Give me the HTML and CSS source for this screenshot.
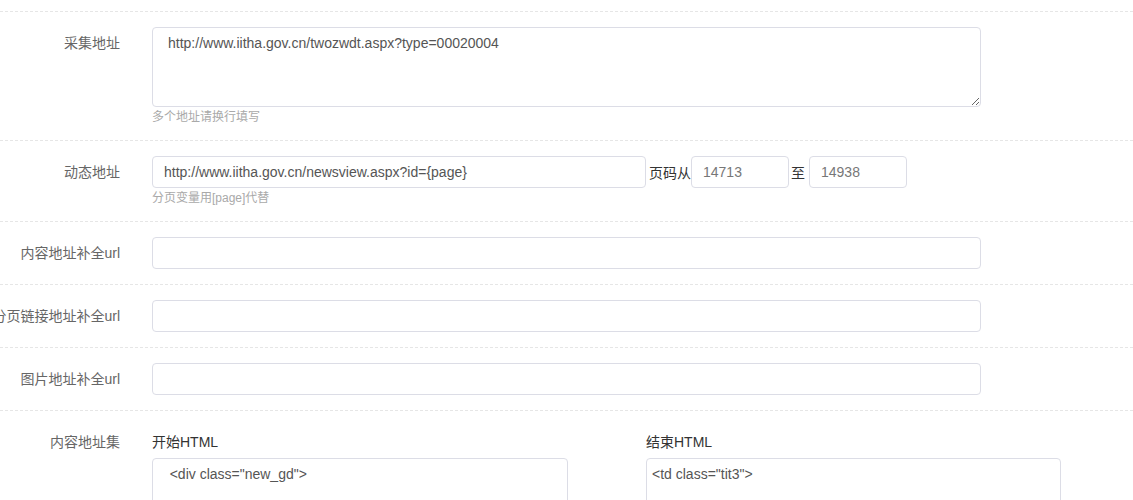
FILE: index.html
```html
<!DOCTYPE html>
<html lang="zh-CN">
<head>
    <meta charset="UTF-8">
    <meta name="viewport" content="width=device-width, initial-scale=1.0">
    <title>采集设置</title>
    <link rel="stylesheet" href="styles.css">
</head>
<body>
    <form class="form">
        <div class="form-item form-edge"></div>

        <div class="form-item">
            <label class="form-label">采集地址</label>
            <div class="form-block">
                <textarea class="input url-area">http://www.iitha.gov.cn/twozwdt.aspx?type=00020004</textarea>
                <div class="form-tip">多个地址请换行填写</div>
            </div>
        </div>

        <div class="form-item">
            <label class="form-label">动态地址</label>
            <div class="form-block">
                <div class="page-range">
                    <input class="input dyn-url" type="text" value="http://www.iitha.gov.cn/newsview.aspx?id={page}">
                    <span class="range-text">页码从</span>
                    <input class="input page-num" type="text" value="14713">
                    <span class="range-text range-to">至</span>
                    <input class="input page-num page-end" type="text" value="14938">
                </div>
                <div class="form-tip">分页变量用[page]代替</div>
            </div>
        </div>

        <div class="form-item">
            <label class="form-label">内容地址补全url</label>
            <div class="form-block">
                <input class="input wide" type="text">
            </div>
        </div>

        <div class="form-item">
            <label class="form-label">分页链接地址补全url</label>
            <div class="form-block">
                <input class="input wide" type="text">
            </div>
        </div>

        <div class="form-item">
            <label class="form-label">图片地址补全url</label>
            <div class="form-block">
                <input class="input wide" type="text">
            </div>
        </div>

        <div class="form-item">
            <label class="form-label">内容地址集</label>
            <div class="form-block html-cols">
                <div class="html-col">
                    <div class="sub-label">开始HTML</div>
                    <textarea class="input html-area">   &lt;div class="new_gd"&gt;</textarea>
                </div>
                <div class="html-col">
                    <div class="sub-label">结束HTML</div>
                    <textarea class="input html-area html-end">&lt;td class="tit3"&gt;</textarea>
                </div>
            </div>
        </div>
    </form>
</body>
</html>
```

FILE: styles.css
```css
body {
    margin: 0;
    background: #fff;
    font-family: "Liberation Sans", "Noto Sans CJK SC", sans-serif;
    font-size: 14px;
    color: #666;
    overflow: hidden;
}
.form {
    margin: 0;
}
.form-item {
    display: flex;
    padding: 15px 0;
    border-bottom: 1px dashed #e6e6e6;
}
.form-edge {
    height: 11px;
    padding: 0;
}
.form-label {
    width: 120px;
    flex-shrink: 0;
    display: flex;
    justify-content: flex-end;
    white-space: nowrap;
    line-height: 32px;
    color: #666;
}
.form-block {
    margin-left: 32px;
}
.input {
    box-sizing: border-box;
    border: 1px solid #dcdde6;
    border-radius: 4px;
    background: #fff;
    font-family: "Liberation Sans", "Noto Sans CJK SC", sans-serif;
    font-size: 14px;
    color: #555;
    outline: none;
    margin: 0;
}
input.input {
    height: 32px;
    padding: 0 11px;
}
.wide {
    width: 829px;
    display: block;
}
.url-area {
    display: block;
    width: 829px;
    height: 80px;
    padding: 5px 15px;
    line-height: 20px;
}
.form-tip {
    margin-top: 3px;
    font-size: 12px;
    line-height: 15px;
    color: #a9a9a9;
}
.page-range {
    display: flex;
    align-items: center;
}
.dyn-url {
    width: 494px;
}
.range-text {
    margin-left: 3px;
    color: #333;
}
.range-to {
    margin-left: 2px;
    margin-right: 4px;
}
.page-num {
    width: 98px;
    color: #777;
}
.html-cols {
    display: flex;
}
.html-col {
    width: 494px;
}
.sub-label {
    line-height: 32px;
    color: #333;
}
.html-area {
    display: block;
    width: 416px;
    height: 100px;
    padding: 5px 5px;
    line-height: 20px;
    white-space: pre;
}
.html-end {
    width: 415px;
}
```
